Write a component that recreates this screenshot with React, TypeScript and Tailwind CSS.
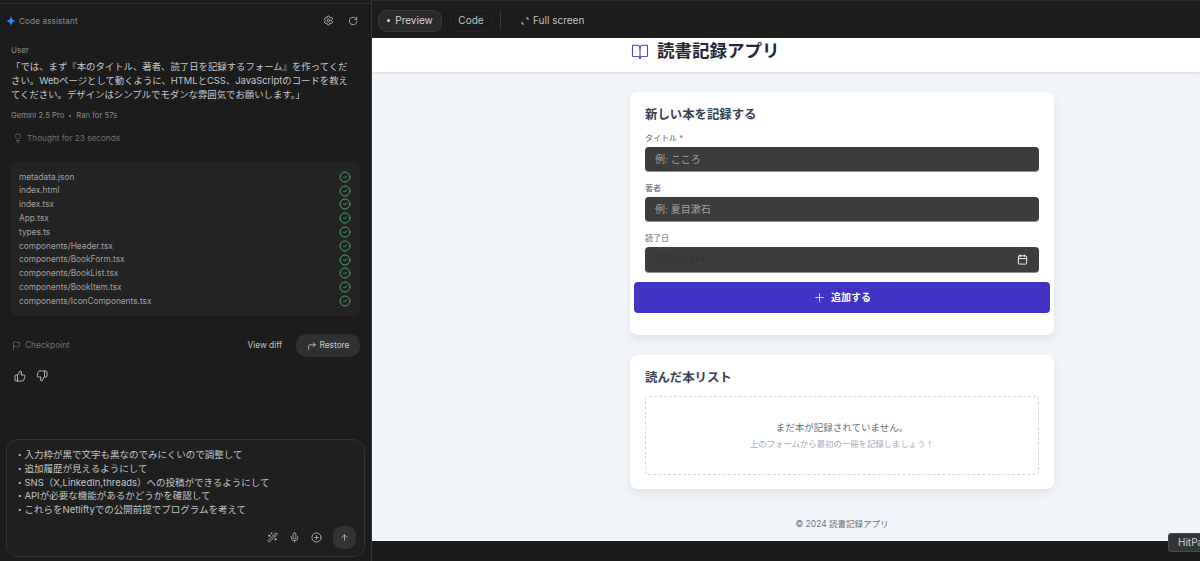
import { BookOpen, Calendar, Flag, Lightbulb, Mic, Plus, PlusCircle, RotateCw, Settings, ThumbsDown, ThumbsUp, ArrowUp, CircleCheck, CornerUpRight, WandSparkles } from 'lucide-react';

const font = { fontFamily: 'Inter, "Noto Sans CJK JP", sans-serif' };

const files = [
  'metadata.json',
  'index.html',
  'index.tsx',
  'App.tsx',
  'types.ts',
  'components/Header.tsx',
  'components/BookForm.tsx',
  'components/BookList.tsx',
  'components/BookItem.tsx',
  'components/IconComponents.tsx',
];

const messageLines = [
  '「では、まず『本のタイトル、著者、読了日を記録するフォーム』を作ってくだ',
  'さい。Webページとして動くように、HTMLとCSS、JavaScriptのコードを教え',
  'てください。デザインはシンプルでモダンな雰囲気でお願いします。」',
];

const promptLines = [
  '・入力枠が黒で文字も黒なのでみにくいので調整して',
  '・追加履歴が見えるようにして',
  '・SNS（X,LinkedIn,threads）への投稿ができるようにして',
  '・APIが必要な機能があるかどうかを確認して',
  '・これらをNetliftyでの公開前提でプログラムを考えて',
];

function Sidebar() {
  return (
    <aside className="w-[372px] shrink-0 h-full flex flex-col bg-[#1c1c1d] border-r border-[#333]">
      <div className="h-[34px] mt-[3px] flex items-center justify-between pl-[6px] pr-[13px] border-t border-[#2a2a2a]">
        <div className="flex items-center gap-[3px] pt-[1px]">
          <svg width="10" height="10" viewBox="0 0 24 24" className="text-[#3b82f6]">
            <path fill="currentColor" d="M12 0C13 7 17 11 24 12C17 13 13 17 12 24C11 17 7 13 0 12C7 11 11 7 12 0Z" />
          </svg>
          <span className="text-[8.2px] tracking-[0.1px] text-[#8a8a8a]">Code assistant</span>
        </div>
        <div className="flex items-center gap-[14px] text-[#b5b5b5]">
          <Settings size={11} />
          <RotateCw size={10} />
        </div>
      </div>
      <div className="px-[11px] pt-[6px]">
        <div className="text-[8px] leading-[14px] text-[#8f8f8f]">User</div>
        <div className="mt-[3px] text-[9.4px] leading-[14px] text-[#c8c8c8]">
          {messageLines.map(l => (
            <div key={l} className="whitespace-nowrap">{l}</div>
          ))}
        </div>
        <div className="mt-[8px] flex items-center gap-[5px] text-[7.7px] leading-[12px] text-[#8a8a8a]">
          <span>Gemini 2.5 Pro</span>
          <span className="w-[2px] h-[2px] rounded-full bg-[#8a8a8a]" />
          <span>Ran for 57s</span>
        </div>
        <div className="mt-[10px] flex items-center gap-[4px] pl-[2px] text-[8.2px] leading-[12px] text-[#6e6e6e]">
          <Lightbulb size={10} />
          <span>Thought for 23 seconds</span>
        </div>
      </div>
      <div className="mx-[11px] mt-[17px] h-[155px] shrink-0 rounded-[6px] bg-[#232324] pl-[8px] pr-[9px] pt-[9px]">
        {files.map(f => (
          <div key={f} className="h-[13.8px] flex items-center justify-between text-[8.3px] text-[#a0a0a0]">
            <span>{f}</span>
            <CircleCheck size={12} className="text-[#45a566]" />
          </div>
        ))}
      </div>
      <div className="mx-[11px] mt-[18px] flex items-center justify-between">
        <div className="flex items-center gap-[4px] pl-[1px] text-[8.3px] text-[#6e6e6e]">
          <Flag size={9} />
          <span>Checkpoint</span>
        </div>
        <div className="flex items-center gap-[14px]">
          <span className="text-[8.3px] text-[#c4c4c4]">View diff</span>
          <div className="w-[64px] h-[23px] rounded-[10px] bg-[#303031] flex items-center justify-center gap-[3px] text-[8.3px] text-[#c8c8c8]">
            <CornerUpRight size={10} />
            <span>Restore</span>
          </div>
        </div>
      </div>
      <div className="ml-[14px] mt-[13px] flex items-center gap-[10px] text-[#b0b0b0]">
        <ThumbsUp size={12} />
        <ThumbsDown size={12} />
      </div>
      <div className="mx-[6px] mt-auto mb-[4px] h-[118px] shrink-0 rounded-[12px] border border-[#333] bg-[#1f1f20] pl-[8px] pr-[8px] pt-[8px]">
        {promptLines.map(l => (
          <div key={l} className="text-[9.5px] leading-[13.8px] text-[#c4c4c4]">{l}</div>
        ))}
        <div className="mt-[9px] flex items-center justify-end gap-[11px] text-[#b0b0b0]">
          <WandSparkles size={11} />
          <Mic size={11} />
          <PlusCircle size={11} />
          <div className="w-[23px] h-[23px] rounded-[9px] bg-[#333334] flex items-center justify-center text-[#d0d0d0]">
            <ArrowUp size={9} />
          </div>
        </div>
      </div>
    </aside>
  );
}

function Field({ label, required, placeholder }: { label: string; required?: boolean; placeholder: string }) {
  return (
    <div className="mb-[9px]">
      <div className="text-[8px] leading-[15px] text-[#5b6472]">
        {label}
        {required && <span className="text-[#e24b4b]"> *</span>}
      </div>
      <div className="mt-[1px] h-[25px] rounded-[4px] bg-[#3c3c3c] border-b border-[#8d8d8d] px-[10px] flex items-center text-[10px] text-[#a0a0a0]">
        {placeholder}
      </div>
    </div>
  );
}

function Preview() {
  return (
    <main className="flex-1 min-w-0 h-full flex flex-col">
      <div className="h-[38px] shrink-0 bg-[#1c1c1d] flex items-center pl-[6px] pt-[2px] border-t border-[#2a2a2a]">
        <div className="h-[22px] w-[64px] rounded-[9px] bg-[#2a2a2b] border border-[#3a3a3a] flex items-center justify-center gap-[5px] text-[10px] text-[#d4d4d4]">
          <span className="w-[3px] h-[3px] rounded-full bg-[#d4d4d4]" />
          Preview
        </div>
        <div className="ml-[8px] h-[22px] w-[42px] rounded-[9px] border border-[#252526] flex items-center justify-center text-[10px] text-[#c0c0c0]">
          Code
        </div>
        <div className="w-px h-[17px] bg-[#3a3a3a] ml-[8px]" />
        <div className="ml-[20px] flex items-center gap-[4px] text-[10px] text-[#c0c0c0]">
          <svg width="8" height="8" viewBox="0 0 8 8" fill="none" stroke="currentColor" strokeWidth="1">
            <path d="M5 1H7V3M1 5V7H3" />
          </svg>
          Full screen
        </div>
      </div>
      <div className="h-[34px] shrink-0 bg-white shadow-[0_1px_3px_rgba(0,0,0,0.12)] z-10 flex justify-center pl-[112px]">
        <div className="w-[424px] flex items-center gap-[8px] pl-[1px] pb-[7px]">
          <BookOpen size={18} strokeWidth={1.5} className="text-[#4f46c8]" />
          <span className="text-[17.5px] font-bold text-[#1f2937]">読書記録アプリ</span>
        </div>
      </div>
      <div className="flex-1 bg-[#f1f5f9] flex flex-col items-center pt-[20px] pl-[112px]">
        <section className="w-[424px] h-[243px] bg-white rounded-[8px] shadow-[0_4px_8px_rgba(0,0,0,0.08)] px-[15px] pt-[15px]">
          <h2 className="text-[12.4px] leading-[16px] font-bold text-[#374151] mb-[8px]">新しい本を記録する</h2>
          <Field label="タイトル" required placeholder="例: こころ" />
          <Field label="著者" placeholder="例: 夏目漱石" />
          <div className="mb-[9px]">
            <div className="text-[8px] leading-[15px] text-[#5b6472]">読了日</div>
            <div className="mt-[1px] h-[26px] rounded-[4px] bg-[#3c3c3c] border-b border-[#8d8d8d] pl-[10px] pr-[11px] flex items-center justify-between text-[10px] text-[#30303c]">
              2025/11/14
              <Calendar size={11} className="text-white" />
            </div>
          </div>
          <div className="mx-[-11px] h-[31px] rounded-[4px] bg-[#4233c4] flex items-center justify-center gap-[5px] text-[10px] font-bold text-white">
            <Plus size={13} strokeWidth={1.5} />
            追加する
          </div>
        </section>
        <section className="mt-[20px] w-[424px] h-[134px] bg-white rounded-[8px] shadow-[0_4px_8px_rgba(0,0,0,0.08)] px-[15px] pt-[15px]">
          <h2 className="text-[12.4px] leading-[16px] font-bold text-[#374151] mb-[10px]">読んだ本リスト</h2>
          <div className="h-[79px] rounded-[4px] border border-dashed border-[#d4d7dc] flex flex-col items-center justify-center">
            <p className="text-[9.5px] leading-[14px] text-[#6b7280]">まだ本が記録されていません。</p>
            <p className="mt-[3px] text-[8.4px] leading-[12px] text-[#a5acb8]">上のフォームから最初の一冊を記録しましょう！</p>
          </div>
        </section>
        <footer className="mt-[28px] text-[8.5px] leading-[14px] text-[#6b7280]">© 2024 読書記録アプリ</footer>
      </div>
      <div className="h-[20px] shrink-0 bg-[#1b1b1b]" />
    </main>
  );
}

export default function App() {
  return (
    <div className="relative w-[1200px] h-[561px] overflow-hidden flex bg-[#1c1c1d]" style={font}>
      <Sidebar />
      <Preview />
      <div className="absolute left-[1168px] top-[533px] h-[19px] w-[40px] rounded-l-[3px] bg-[#333639] border border-[#4a4a4a] pl-[9px] flex items-center text-[10px] text-[#d0d0d0]">
        HitPa
      </div>
    </div>
  );
}
